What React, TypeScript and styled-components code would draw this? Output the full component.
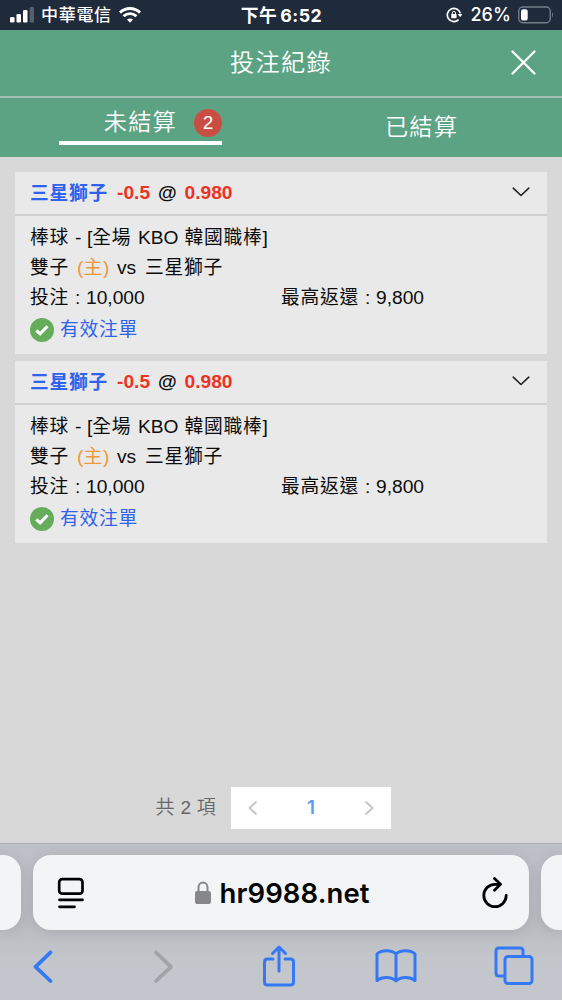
import React from 'react';
import styled, { createGlobalStyle } from 'styled-components';

const GlobalStyle = createGlobalStyle`
  * { box-sizing: border-box; }
  body { margin: 0; background: #d8d8d8; }
  svg { display: block; flex: none; }
`;

const sans = `"Liberation Sans", "Noto Sans CJK TC", sans-serif`;
const system = `Inter, "Noto Sans CJK TC", sans-serif`;

const Screen = styled.div`
  width: 562px;
  height: 1000px;
  display: flex;
  flex-direction: column;
  overflow: hidden;
  background: #d8d8d8;
  font-family: ${sans};
  color: #0c0c0c;
  white-space: nowrap;
`;

const StatusBar = styled.div`
  height: 30px;
  flex: none;
  display: grid;
  grid-template-columns: 1fr auto 1fr;
  align-items: center;
  padding: 0 8px 0 10px;
  background: #1f2a3a;
  color: #fff;
  font: 500 17px/30px ${system};
`;

const StatusSide = styled.div<{ $end?: boolean }>`
  display: flex;
  align-items: center;
  gap: 7px;
  justify-content: ${(p) => (p.$end ? 'flex-end' : 'flex-start')};
`;

const Carrier = styled.span`
  padding-top: 1px;
  line-height: 29px;
  letter-spacing: 0.7px;
`;

const Battery = styled.span`
  font-size: 18px;
  letter-spacing: 0.1px;
`;

const Clock = styled.div`
  display: flex;
  gap: 3px;
  padding: 1px 1px 0 0;
  font-size: 17.8px;
  line-height: 29px;
  font-weight: 700;
  letter-spacing: 0.45px;
`;

const TitleBar = styled.header`
  height: 68px;
  flex: none;
  display: grid;
  grid-template-columns: 1fr auto 1fr;
  align-items: center;
  padding: 0 26px 2px;
  border-bottom: 2px solid #a9bfb4;
  background: #5ca384;
  color: #fff;
`;

const Title = styled.h1`
  grid-column: 2;
  margin: 0;
  padding-top: 1px;
  font: 350 24.2px/34px ${sans};
  letter-spacing: 1.3px;
`;

const CloseButton = styled.div`
  justify-self: end;
`;

const Tabs = styled.nav`
  height: 59px;
  flex: none;
  display: grid;
  grid-template-columns: 281px 281px;
  background: #5ca384;
  color: #fff;
  font: 350 23.2px/34px ${sans};
  letter-spacing: 1.2px;
`;

const Tab = styled.div`
  display: flex;
  justify-content: center;
  padding-top: 12px;
`;

const ActiveTab = styled.div`
  width: 163px;
  height: 47px;
  margin-left: 59px;
  padding-top: 7px;
  display: flex;
  justify-content: flex-end;
  gap: 17px;
  border-bottom: 4px solid #fff;
`;

const Badge = styled.span`
  width: 28px;
  height: 28px;
  margin-top: 4px;
  border-radius: 50%;
  background: #c84e43;
  font: 19px/28px ${sans};
  letter-spacing: 0;
  text-align: center;
`;

const Content = styled.main`
  flex: 1;
  min-height: 0;
  display: flex;
  flex-direction: column;
  gap: 7px;
  padding: 14px 15px 14px;
  border-top: 1px solid #d3d8d5;
`;

const Card = styled.article`
  height: 182px;
  flex: none;
  background: #e9e9e9;
  font-size: 19.2px;
`;

const CardHeader = styled.div`
  height: 44px;
  display: flex;
  align-items: center;
  padding: 0 17px 0 15px;
  border-bottom: 2px solid #cfcfcf;
  font-weight: 700;
`;

const Team = styled.span`
  width: 87px;
  margin-top: -3px;
  color: #2e62ef;
  font-size: 18.75px;
  letter-spacing: 0.75px;
`;

const Odds = styled.span<{ $width: number }>`
  width: ${(p) => p.$width}px;
  color: #ec3323;
`;

const At = styled.span`
  width: 26.5px;
`;

const Spacer = styled.span`
  flex: 1;
`;

const ToggleIcon = styled.svg`
  margin-top: -2px;
`;

const CardBody = styled.div`
  padding: 7px 15px;
`;

const Line = styled.div`
  height: 30px;
  display: flex;
  line-height: 30px;
`;

const Zh = styled.span`
  font-size: 18.75px;
  letter-spacing: 0.75px;
`;

const Piece = styled.span<{ $width: number }>`
  width: ${(p) => p.$width}px;
  flex: none;
`;

const Home = styled(Piece)`
  color: #ef973c;
`;

const Valid = styled.div`
  height: 30px;
  margin-top: 2px;
  display: flex;
  align-items: center;
  gap: 6px;
  color: #2e62ef;
`;

const ValidLabel = styled(Zh)`
  margin-top: -5px;
`;

const Pager = styled.div`
  margin-top: auto;
  height: 42px;
  display: flex;
  align-items: center;
  padding-left: 140.5px;
  color: #666;
  font: 350 19px/42px ${sans};
`;

const Count = styled.div`
  width: 75.5px;
  letter-spacing: 0.3px;
`;

const PageBox = styled.div`
  width: 160px;
  height: 42px;
  display: flex;
  align-items: center;
  justify-content: space-between;
  padding: 0 17px;
  background: #fff;
  color: #5a9cf8;
  font: 600 19px/42px Inter, sans-serif;
`;

const Browser = styled.footer`
  height: 157px;
  flex: none;
  border-top: 1px solid #abadb3;
  background: linear-gradient(#bdc0c6 0, #b9bdc2 80px, #c2c6cb 112px, #c4c6cc 100%);
`;

const AddressRow = styled.div`
  display: grid;
  grid-template-columns: 21px 496px 21px;
  gap: 12px;
  height: 86px;
  padding-top: 11px;
`;

const SideTab = styled.div<{ $right?: boolean }>`
  height: 75px;
  background: #f3f4f6;
  border-radius: ${(p) => (p.$right ? '18px 0 0 18px' : '0 18px 18px 0')};
  box-shadow: 0 2px 14px #0000001a;
`;

const Address = styled.div`
  height: 75px;
  display: grid;
  grid-template-columns: 1fr auto 1fr;
  align-items: center;
  padding: 0 20px 0 24px;
  border-radius: 18px;
  background: #f3f4f6;
  box-shadow: 0 2px 14px #0000001a;
  color: #050505;
  font: 600 27.5px/75px ${system};
`;

const Site = styled.div`
  display: flex;
  align-items: center;
  gap: 9px;
`;

const Host = styled.span`
  width: 152px;
  padding-top: 1px;
  letter-spacing: 0.1px;
`;

const Reload = styled.div`
  justify-self: end;
`;

const Toolbar = styled.div`
  display: grid;
  grid-template-columns: 86px 156px 74px 160px 76px;
  justify-items: center;
  align-items: center;
  height: 71px;
`;

const Chevron = ({ right }: { right?: boolean }) => (
  <svg width="10" height="14" viewBox="0 0 10 14" fill="none" stroke="#c0c4cc" strokeWidth="1.8" strokeLinecap="round" strokeLinejoin="round">
    <path d={right ? 'M2 1l6.5 6L2 13' : 'M8 1L1.500 7L8 13'} />
  </svg>
);

const Bet = () => (
  <Card>
    <CardHeader>
      <Team>三星獅子</Team>
      <Odds $width={41}>-0.5</Odds>
      <At>@</At>
      <Odds $width={60}>0.980</Odds>
      <Spacer />
      <ToggleIcon width="18" height="10" viewBox="0 0 18 10" fill="none" stroke="#222" strokeWidth="1.6" strokeLinecap="round" strokeLinejoin="round">
        <path d="M1.200 1.200L9 8.500L16.800 1.200" />
      </ToggleIcon>
    </CardHeader>
    <CardBody>
      <Line>
        <Piece $width={45}><Zh>棒球</Zh></Piece>
        <Piece $width={12}>-</Piece>
        <Piece $width={51}>[<Zh>全場</Zh></Piece>
        <Piece $width={46.5}>KBO</Piece>
        <span><Zh>韓國職棒</Zh>]</span>
      </Line>
      <Line>
        <Piece $width={47}><Zh>雙子</Zh></Piece>
        <Home $width={40}>(<Zh>主</Zh>)</Home>
        <Piece $width={28}>vs</Piece>
        <Zh>三星獅子</Zh>
      </Line>
      <Line>
        <Piece $width={45}><Zh>投注</Zh></Piece>
        <Piece $width={11}>:</Piece>
        <Piece $width={150}>10,000</Piece>
        <Spacer />
        <Piece $width={84}><Zh>最高返還</Zh></Piece>
        <Piece $width={11}>:</Piece>
        <Piece $width={156}>9,800</Piece>
      </Line>
      <Valid>
        <svg width="24" height="24" viewBox="0 0 24 24">
          <circle cx="12" cy="12" r="12" fill="#65ac5b" />
          <path d="M6.300 12.300l3.800 3.600 7.400-7.600" fill="none" stroke="#fff" strokeWidth="3" />
        </svg>
        <ValidLabel>有效注單</ValidLabel>
      </Valid>
    </CardBody>
  </Card>
);

export default function App() {
  return (
    <Screen>
      <GlobalStyle />
      <StatusBar>
        <StatusSide>
          <svg width="24" height="16" viewBox="0 0 24 16" fill="#fff">
            <rect x="0" y="10" width="4.500" height="5.500" rx="1.300" />
            <rect x="6.500" y="7" width="4.500" height="8.500" rx="1.300" />
            <rect x="13" y="3" width="4.500" height="12.500" rx="1.300" />
            <rect x="19.700" y="0" width="4.300" height="15.500" rx="1.300" opacity=".25" />
          </svg>
          <Carrier>中華電信</Carrier>
          <svg width="22" height="16" viewBox="0 0 22 16" fill="none" stroke="#fff" strokeWidth="2.900">
            <path d="M1 5.600C6.500.100 15.500.100 21 5.600M4.600 9.200c3.600-3.500 9.200-3.500 12.800 0" />
            <path d="M11 15.800l-3-3.300c1.700-1.500 4.300-1.500 6 0z" fill="#fff" stroke="none" />
          </svg>
        </StatusSide>
        <Clock><span>下午</span><span>6:52</span></Clock>
        <StatusSide $end>
          <svg width="17" height="16" viewBox="0 0 17 16" fill="none" stroke="#fff" strokeWidth="1.700">
            <path d="M14.300 6.300A6.600 6.600 0 1 0 12.600 12.700" />
            <path d="M11.800 7h4.600l-2.300 3.200z" fill="#fff" stroke="none" />
            <rect x="5.200" y="7" width="5.400" height="4.300" rx=".7" fill="#fff" stroke="none" />
            <path d="M6.300 7.500V6a1.600 1.600 0 0 1 3.200 0v1.500" strokeWidth="1" />
          </svg>
          <Battery>26%</Battery>
          <svg width="36" height="18" viewBox="0 0 36 18">
            <rect x=".75" y="1" width="31.500" height="15.800" rx="4" fill="none" stroke="#767e89" strokeWidth="1.400" />
            <rect x="3" y="3.200" width="6.700" height="11.400" rx="2.200" fill="#fff" />
            <path d="M34 6.300q2 2.600 0 5.200z" fill="#767e89" />
          </svg>
        </StatusSide>
      </StatusBar>

      <TitleBar>
        <Title>投注紀錄</Title>
        <CloseButton>
          <svg width="25" height="25" viewBox="0 0 25 25" stroke="#fff" strokeWidth="2.300" strokeLinecap="round">
            <path d="M1.500 1.500l22 22M23.500 1.500l-22 22" />
          </svg>
        </CloseButton>
      </TitleBar>
      <Tabs>
        <ActiveTab>
          <span>未結算</span>
          <Badge>2</Badge>
        </ActiveTab>
        <Tab>已結算</Tab>
      </Tabs>

      <Content>
        <Bet />
        <Bet />
        <Pager>
          <Count>共 2 項</Count>
          <PageBox>
            <Chevron />
            1
            <Chevron right />
          </PageBox>
        </Pager>
      </Content>

      <Browser>
        <AddressRow>
          <SideTab />
          <Address>
            <svg width="28" height="32" viewBox="0 0 28 32" fill="none" stroke="#000" strokeWidth="2.700" strokeLinecap="round">
              <rect x="2.200" y="2.200" width="23.300" height="14.500" rx="3" />
              <path d="M2.500 22.800h23M2.500 29.800h15" />
            </svg>
            <Site>
              <svg width="16" height="24" viewBox="0 0 16 24">
                <path d="M3.500 11V6.500a4.500 5 0 0 1 9 0V11" fill="none" stroke="#86868b" strokeWidth="2" />
                <rect x="0" y="10" width="16" height="13" rx="2.200" fill="#86868b" />
              </svg>
              <Host>hr9988.net</Host>
            </Site>
            <Reload>
              <svg width="28" height="32" viewBox="0 0 28 32" fill="none" stroke="#000" strokeWidth="2.800" strokeLinecap="round" strokeLinejoin="round">
                <path d="M25.200 18.500A11.200 11.200 0 1 1 14 7.300h5" />
                <path d="M13.500 1.500l6 5.800-6 6" />
              </svg>
            </Reload>
          </Address>
          <SideTab $right />
        </AddressRow>
        <Toolbar>
          <svg width="22" height="34" viewBox="0 0 22 34" fill="none" stroke="#3478f6" strokeWidth="3.700" strokeLinecap="round" strokeLinejoin="round">
            <path d="M18.500 3.300L3.500 17.800L18.500 32" />
          </svg>
          <svg width="22" height="34" viewBox="0 0 22 34" fill="none" stroke="#a1a3a7" strokeWidth="3.700" strokeLinecap="round" strokeLinejoin="round">
            <path d="M3 3.300L18 17.800L3 32" />
          </svg>
          <svg width="34" height="44" viewBox="0 0 34 44" fill="none" stroke="#3478f6" strokeWidth="3" strokeLinecap="round" strokeLinejoin="round">
            <path d="M11 15H5.500Q2.500 15 2.500 18V38Q2.500 41 5.500 41H28.500Q31.500 41 31.500 38V18Q31.500 15 28.500 15H23" />
            <path d="M17 27V3M10.500 9.500L17 3L23.500 9.500" />
          </svg>
          <svg width="42" height="36" viewBox="0 0 42 36" fill="none" stroke="#3478f6" strokeWidth="3" strokeLinejoin="round">
            <path d="M21 6C17 1.500 6 1.500 2 6V32.500C7 28.500 16 28.500 21 33C26 28.500 35 28.500 40 32.500V6C36 1.500 25 1.500 21 6V33" />
          </svg>
          <svg width="40" height="40" viewBox="0 0 40 40" fill="none" stroke="#3478f6" strokeWidth="3" strokeLinejoin="round">
            <path d="M10.500 30H5Q2 30 2 27V5Q2 2 5 2H26Q29 2 29 5V10" />
            <rect x="11" y="10.500" width="27" height="27" rx="3" />
          </svg>
        </Toolbar>
      </Browser>
    </Screen>
  );
}
